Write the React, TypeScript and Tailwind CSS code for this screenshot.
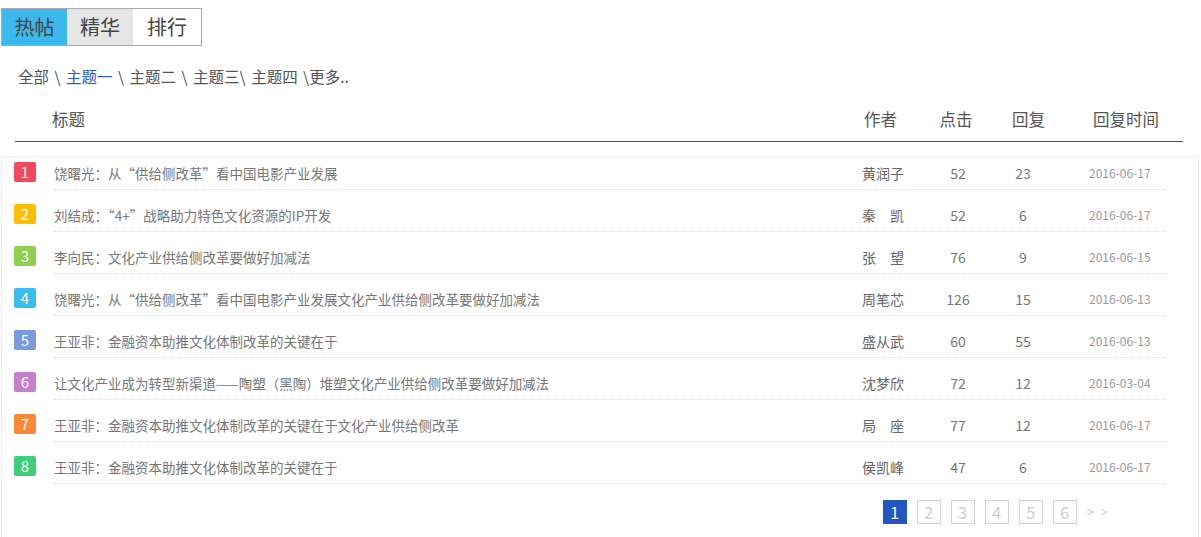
import React from "react";

const rows = [
  { c: "bg-[#f0495c]", t: "饶曙光：从“供给侧改革”看中国电影产业发展", a: "黄润子", k: "52", r: "23", d: "2016-06-17" },
  { c: "bg-[#ffbe00]", t: "刘结成：“4+”战略助力特色文化资源的IP开发", a: "秦　凯", k: "52", r: "6", d: "2016-06-17" },
  { c: "bg-[#8cd04c]", t: "李向民：文化产业供给侧改革要做好加减法", a: "张　望", k: "76", r: "9", d: "2016-06-15" },
  { c: "bg-[#3bbcf1]", t: "饶曙光：从“供给侧改革”看中国电影产业发展文化产业供给侧改革要做好加减法", a: "周笔芯", k: "126", r: "15", d: "2016-06-13" },
  { c: "bg-[#7b9be0]", t: "王亚非：金融资本助推文化体制改革的关键在于", a: "盛从武", k: "60", r: "55", d: "2016-06-13" },
  { c: "bg-[#c47fcd]", t: "让文化产业成为转型新渠道——陶塑（黑陶）堆塑文化产业供给侧改革要做好加减法", a: "沈梦欣", k: "72", r: "12", d: "2016-03-04" },
  { c: "bg-[#f98838]", t: "王亚非：金融资本助推文化体制改革的关键在于文化产业供给侧改革", a: "局　座", k: "77", r: "12", d: "2016-06-17" },
  { c: "bg-[#3fce7c]", t: "王亚非：金融资本助推文化体制改革的关键在于", a: "侯凯峰", k: "47", r: "6", d: "2016-06-17" },
];

export default function App() {
  return (
    <div
      className="w-[1201px] h-[537px] overflow-hidden bg-white pt-[8px] pl-[1px]"
      style={{ fontFamily: '"Noto Sans CJK SC", "Noto Sans", sans-serif' }}
    >
      {/* tabs */}
      <div className="flex w-[201px] h-[38px] border border-[#aaaaaa] text-[20px] text-[#444]">
        <div className="w-[65px] flex items-center justify-center bg-[#3bb8ed]">热帖</div>
        <div className="w-[66px] flex items-center justify-center bg-[#e6e6e6]">精华</div>
        <div className="flex-1 flex items-center justify-center bg-white">排行</div>
      </div>

      {/* breadcrumb */}
      <div className="mt-[18px] pl-[17px] h-[24px] leading-[24px] text-[15.5px] text-[#555] [word-spacing:2px]">
        全部 \ <span className="text-[#2f5cc4]">主题一</span> \ 主题二 \ 主题三\ 主题四 \更多..
      </div>

      {/* header */}
      <div className="mt-[9px] ml-[14px] w-[1168px] h-[45px] border-b border-[#2b56a8] flex items-center text-[16.5px] text-[#555]">
        <div className="pl-[37px] w-[849px]">标题</div>
        <div className="w-[60px]">作者</div>
        <div className="w-[64px] text-center">点击</div>
        <div className="w-[81px] text-center">回复</div>
        <div className="w-[114px] text-center">回复时间</div>
      </div>

      {/* list */}
      <div className="mt-[14px] w-[1198px] h-[400px] border border-[#ececec] pl-[12px]">
        {rows.map((row, i) => (
          <div key={i} className="flex h-[42px]">
            <div
              className={`${row.c} mt-[5px] w-[22px] h-[20px] rounded-[2px] text-white text-[15px] leading-[20px] text-center`}
            >
              {i + 1}
            </div>
            <div className="ml-[18px] w-[1112px] h-[33px] border-b border-dotted border-[#d6d6d6] flex items-center">
              <div className="w-[808px] pl-0 text-[13.5px] text-[#777] whitespace-nowrap overflow-hidden">{row.t}</div>
              <div className="w-[60px] text-[14px] text-[#666] whitespace-nowrap">{row.a}</div>
              <div className="w-[72px] text-center text-[14px] text-[#777]">{row.k}</div>
              <div className="w-[58px] text-center text-[14px] text-[#777]">{row.r}</div>
              <div className="w-[114px] pl-[37px] text-[12px] text-[#999]">{row.d}</div>
            </div>
          </div>
        ))}
        <div className="mt-[7px] flex items-center justify-end pr-[88px] gap-[10px]">
          <div className="w-[24px] h-[24px] bg-[#2257c2] text-white text-[16px] flex items-center justify-center">1</div>
          {["2", "3", "4", "5", "6"].map((n) => (
            <div key={n} className="w-[24px] h-[24px] border border-[#d4d4d4] text-[#cccccc] text-[16px] flex items-center justify-center">
              {n}
            </div>
          ))}
          <div className="text-[13px] text-[#cccccc] tracking-[2px]">&gt; &gt;</div>
        </div>
      </div>
    </div>
  );
}
